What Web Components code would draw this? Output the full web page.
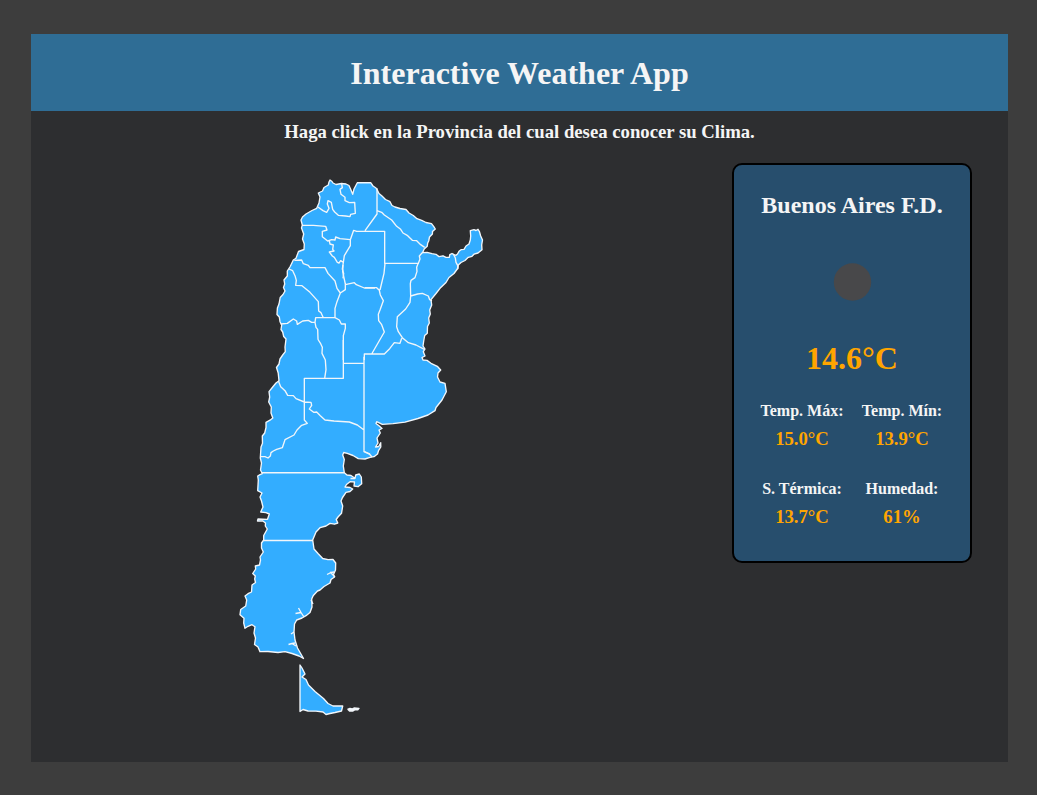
<!DOCTYPE html>
<html lang="es">
<head>
<meta charset="utf-8">
<title>Interactive Weather App</title>
<style>
html,body{margin:0;height:100%}
body{background:#3d3d3d;font-family:"Liberation Serif","Times New Roman",serif;color:#f5f5f5;overflow:hidden}
</style>
</head>
<body>
<weather-app>
  <app-header slot="header">Interactive Weather App</app-header>
  <span slot="hint">Haga click en la Provincia del cual desea conocer su Clima.</span>
  <argentina-map></argentina-map>
  <weather-card>
    <span slot="place">Buenos Aires F.D.</span>
    <span slot="temp">14.6°C</span>
    <weather-stat label="Temp. Máx:">15.0°C</weather-stat>
    <weather-stat label="Temp. Mín:">13.9°C</weather-stat>
    <weather-stat label="S. Térmica:">13.7°C</weather-stat>
    <weather-stat label="Humedad:">61%</weather-stat>
  </weather-card>
</weather-app>
<script>
function define(name, html, setup) {
  customElements.define(name, class extends HTMLElement {
    constructor() {
      super();
      this.attachShadow({mode: "open"}).innerHTML = html;
    }
    connectedCallback() { if (setup) setup(this, this.shadowRoot); }
  });
}

define("app-header", `<style>
:host{display:flex;height:77px;box-sizing:border-box;padding-top:1px;align-items:center;justify-content:center;background:#2f6d95}
h1{margin:0;font-size:32px;line-height:38px}
</style><h1><slot></slot></h1>`);

define("weather-stat", `<style>
:host{display:block;text-align:center;font-weight:bold}
.label{font-size:16px;line-height:18px;white-space:nowrap}
.value{font-size:18.72px;line-height:22px;margin-top:8px;color:#ffa500}
</style><div class="label"></div><div class="value"><slot></slot></div>`,
(el, root) => { root.querySelector(".label").textContent = el.getAttribute("label"); });

define("weather-card", `<style>
:host{display:flex;flex-direction:column;align-items:center;box-sizing:border-box;width:240px;height:400px;border:2px solid #000;border-radius:10px;background:#274e6d}
h2{margin:26px 0 0;font-size:24px;line-height:28px}
svg{display:block;width:100px;height:100px;margin-top:13px}
.temp{margin-top:8px;font-size:32px;line-height:37px;font-weight:bold;color:#ffa500}
.stats{display:grid;grid-template-columns:100px 100px;row-gap:30px;margin-top:25px}
</style>
<h2><slot name="place"></slot></h2>
<svg viewBox="0 0 100 100"><circle cx="50.5" cy="50" r="18.7" fill="#48484a"/></svg>
<div class="temp"><slot name="temp"></slot></div>
<div class="stats"><slot></slot></div>`);

define("argentina-map", `<style>
:host{display:block;width:260px;height:550px}
svg{display:block;width:260px;height:550px}
.land{fill:#33adff}
path{fill:none;stroke:#f2f6fa;stroke-width:1.35;stroke-linejoin:round;vector-effect:non-scaling-stroke}
</style>
<svg viewBox="230 172 260 550">
<path class="land" d="M330 180L332 181.5 333 183 336 184.5 341.5 183.5 346 184 349 185.5 351 190 352.7 194.3 354 189 357.3 182.7 370.7 182.7 373 186 376 188 377.3 190 379 193.5 382 196 385.5 199.5 390 201.7 392 205.5 395 207 400 208.5 406 209.5 409 213 413.3 215.5 417 218.7 421.7 220.3 426 222.5 431.5 223.7 433.8 226.7 435.3 229 432.5 231.5 432.4 234 429.5 237 428.7 241 427.7 243 427.2 246.3 424.2 249 422.5 252.7 427 252.4 432 253.7 436 254.3 439 256.6 443 255.8 446 257.3 449.3 257.3 449.8 254.7 452 253.5 454 254.7 456 255.3 457.5 254 459 251.3 461 249.7 464 249.3 466 246 469 244 470.3 240 470.7 236 470.3 230.7 474 229.7 476 230.5 478 229.3 479.3 231.3 480.7 236 482.5 240 481.7 245 482 249.7 478 253 474 254.2 472 256.3 468.3 257.3 465 260.5 461 262.5 458.3 265 458 268 454 273.5 449 277.5 446 282.5 440 288.3 436 293.5 431 299.7 431.7 305 429.7 310 430.3 314 428.7 318 429.3 323 427.5 326.5 427.3 333.3 424.7 335.5 423.7 341 423 346 425 349 423.3 351.7 425 356 422 357.5 423 360 427 360.4 431 363.3 437.3 366.3 440.7 370 438 373 437.5 377 440 382 445 383.3 446.3 391.7 442 400 436 407.5 435 410.7 428 415 418 418.5 405 422.2 393 423.7 382.3 424.3 376.7 421.7 376 423.5 379.3 426 382 428.5 379 430 380.3 433 377 438 378 443 375.5 447 378.7 446.5 380.7 442.7 380.8 447 378.5 450.7 377.5 454 374 456.7 370 457.3 365 459 358.3 458.7 353 455.5 347.3 453.3 343.7 452.5 342.7 455 344.3 459.5 343.3 466 344.3 472.7 347 475 351 475.5 355 478.3 355.7 475 359.3 474 361.3 477 361.7 483.7 358 486.7 354 486 354.5 482 350 481.7 346.5 484.5 345 487 350 487.5 352.7 489 350 491.5 346 492.3 342.5 497.5 341 501 342.7 506 341.5 513.3 338 517 336.2 519.5 337.8 523 334.5 524.2 330 523.4 326 526 320 527.7 316 532 312.7 540 314 549 318 553.5 322.7 558.5 328 559.7 333 559.5 335.7 563 335.5 570 333.5 574.5 334.5 577 331 579.5 330 583 324 586.5 320 590 317.5 591 313.3 595.5 311.7 599 312 607 310 612.5 306 615.7 302 618 296.7 620 294.5 624 294 632 295 640 297.5 648 303.5 658.5 299 656 292 653.5 285 651.7 278 652.5 268 651.5 260 651.7 258 647 254.5 644.5 255.5 638 254 633 255 626.7 252 624.7 248 626.3 245 628.3 243.7 623 244 618.3 240 614.7 240.7 609.5 245.7 606 246.7 600 245 596 248 593.7 251.5 592 252 585 255.5 582.5 254.7 579 255.3 576 252.7 573.5 255.7 569 255.3 566 259.5 565 260.5 560 260 557 263.3 552 261.5 548 261.5 543 263.7 540 263.7 535.5 267.3 529 265.3 526 265.5 523 262.5 520.8 257.5 521 258 519 267.5 519.3 269.3 514 266 512.7 260.7 512 263 507 261.5 501 260 497 262 493 257.7 490.7 258.3 480 257.7 476 260 474.7 262.3 473.7 260.5 470 261.5 463 260.3 458 261 447 262.5 443.3 262.3 436 264.7 433 266 427.5 266 422.3 270 420.2 272.8 418 271 413 271.3 407 268.7 402 269.7 397 269 391.7 272.7 387 276 383 279 380.7 278.2 373 276.5 367.5 279 364 280 359 282.7 355 285.3 351.7 285 347 286 339 283.7 336.5 282.7 332 281 329.5 281.7 325 280 321.7 279.3 317 277 314.5 277.4 308 279 304 280.2 297.5 283 294.5 285 291 283.5 287.5 284.7 284 284 280 287.3 276 287.3 271 290.2 266.5 293.3 260 296 258.3 298.5 251.5 304 249.5 304.3 244 302.5 239 303.7 234 301.5 228 302.3 225 301 220 302.5 217 306 214 312 210.5 316.7 208.3 319 203 320 197 318.3 193 322.5 191 324 187.5 328.3 185 329 182Z"/>
<path class="land" d="M300 665L302 668 305 674 302 677 306 679.5 308.5 685 315 691.5 323.5 698.5 328 703.5 333 706 342.7 706 341.5 711 335 712.5 330 713.5 326 714.5 323 712 316 711.2 308 711 303 709.5 300 711.5Z"/>
<path d="M347.5 709.5L350 708.5 352 709 354 708 359 708.3 358 709.7 355 709.7 353 711 349.5 711 348 709.5 351 710 356 709"/>
<g transform="translate(290 170) scale(.333333)">
<path d="M155 42L157 53 150 58 153 73 165 82 165 92 178 98 194 97 196 130 182 133 180 140 167 138 145 136 134 126 128 118 124 97 114 92 112 102 117 115 110 127 99 122 84 111M261 55L261 132 225 182M36 166L70 166 107 169 111 180 97 184 97 200 113 213 125 209 135 210 137 201 150 206 181 209M118 212L120 222 130 225 128 238 132 243 118 246 127 258 133 262 142 277 147 279 152 272 160 277 163 257 181 227 181 209 191 181 200 184 240 184M160 277L157 297 161 310 159 325"/>
</g>
<g transform="translate(370 170) scale(.333333)">
<path d="M21 122L35 127 43 135 65 150 80 169 92 178 99 189 113 197 127 211 140 212 152 224 164 232M0 184L44 184 44 280 147 280M157 248L148 258 150 267 145 280M250 252L256 264 258 277 263 286 263 298"/>
</g>
<g transform="translate(265 250) scale(.333333)">
<path d="M88 31L110 30 115 41 130 46 135 53 180 53 189 70 210 93 216 115 226 129 216 155 210 175 210 203M72 57L83 62 90 77 94 91 92 106 111 107 135 127 160 155 161 183 168 188 175 203M226 129L241 119 241 102 233 65 234 45M241 104L268 98 274 104 298 114 330 114M47 222L67 220 85 207 95 213 97 223 113 213 130 211 140 217 150 217 152 203 210 203 223 210 229 222 241 222 241 235 235 257 235 330M150 217L153 232 158 238 159 267 160 270"/>
</g>
<g transform="translate(360 250) scale(.333333)">
<path d="M15 113L50 113 58 121 61 135 70 152 60 180 55 193 56 212 65 224 73 246 35 312M60 120L72 70 75 40M174 41L170 52 171 64 165 83 153 91 151 101 152 138 173 132 187 130 205 138 209 149 216 152M152 138L150 157 137 177 112 200 110 230 115 245 127 263 145 278 168 285 193 298M125 265L120 280 103 278 89 296 73 312 13 312 13 330"/>
</g>
<g transform="translate(260 340) scale(.333333)">
<path d="M55 122L62 140 75 152 83 166 100 167 108 176 133 186 153 187 155 196 148 207 161 217 170 216 181 227 195 240 222 243 268 246 292 255 312 270M133 186L133 115 250 115 250 0M250 70L312 70M312 50L312 335 330 343M133 186L133 240 142 250 125 256 111 270 102 285 75 299 67 323 50 328 40 333 33 338 31 348 24 354 15 350 0 350M175 0L182 11 187 22 186 40 196 60 198 89 194 115"/>
</g>
<path d="M364.3 451.5L369 453.5 372 457M262 472.7H344M263.5 540.5H313M350.5 478.5H355M327 574.5L331 572.5 334 572M330 572L335 577M295.5 613.5L301 612.5 298.5 608M301 612.5L304 617M291 634L294 632M288.5 644.5L292 643.5 296 646M292 643.5L295 643M311 600L313 604"/>
</svg>`);

define("weather-app", `<style>
:host{display:block;box-sizing:border-box;padding:34px 29px 33px 31px;height:795px}
main{display:flex;flex-direction:column;height:728px;background:#2d2e30}
h3{margin:10px 0 0;text-align:center;font-size:18.72px;line-height:22px}
.content{display:grid;grid-template-columns:260px 240px;column-gap:242px;align-items:start;padding-left:199px;margin-top:20px}
::slotted(argentina-map){margin-top:9px}
</style>
<main><slot name="header"></slot><h3><slot name="hint"></slot></h3><div class="content"><slot></slot></div></main>`);
</script>
</body>
</html>
